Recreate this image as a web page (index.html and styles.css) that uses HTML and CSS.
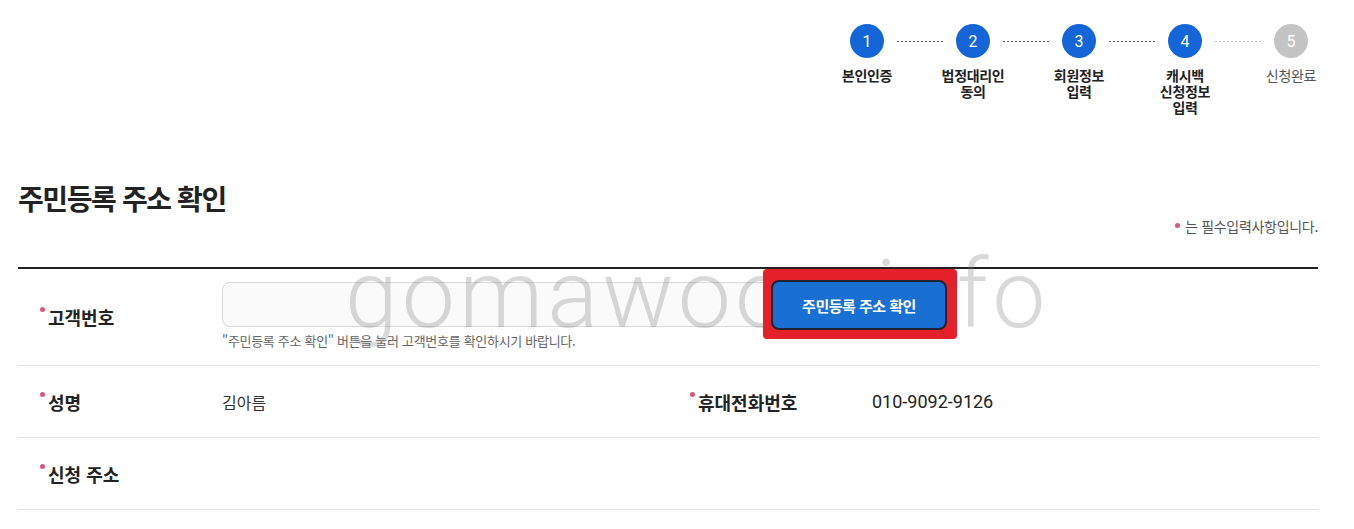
FILE: index.html
```html
<!DOCTYPE html>
<html lang="ko">
<head>
  <meta charset="UTF-8">
  <title>주민등록 주소 확인</title>
  <link rel="stylesheet" href="styles.css">
</head>
<body>

<div class="page">

  <!-- Steps -->
  <div class="steps">
    <div class="step">
      <div class="step-num">1</div>
      <div class="step-label">본인인증</div>
    </div>
    <div class="step-line"></div>
    <div class="step">
      <div class="step-num">2</div>
      <div class="step-label">법정대리인<br>동의</div>
    </div>
    <div class="step-line"></div>
    <div class="step">
      <div class="step-num">3</div>
      <div class="step-label">회원정보<br>입력</div>
    </div>
    <div class="step-line"></div>
    <div class="step">
      <div class="step-num">4</div>
      <div class="step-label">캐시백<br>신청정보<br>입력</div>
    </div>
    <div class="step-line off"></div>
    <div class="step off">
      <div class="step-num">5</div>
      <div class="step-label">신청완료</div>
    </div>
  </div>

  <h1 class="title">주민등록 주소 확인</h1>
  <p class="required-note"><span class="dot"></span>는 필수입력사항입니다.</p>

  <div class="form-table">
    <div class="form-row first">
      <div class="label"><span class="dot"></span>고객번호</div>
      <div class="cell wide">
        <div class="input-col">
          <input type="text" class="text-input">
          <p class="help">"주민등록 주소 확인" 버튼을 눌러 고객번호를 확인하시기 바랍니다.</p>
        </div>
        <div class="highlight">
          <button class="btn-primary">주민등록 주소 확인</button>
        </div>
      </div>
      <div class="watermark">gomawoon.info</div>
    </div>

    <div class="form-row">
      <div class="label"><span class="dot"></span>성명</div>
      <div class="cell">김아름</div>
      <div class="label"><span class="dot"></span>휴대전화번호</div>
      <div class="cell num">010-9092-9126</div>
    </div>

    <div class="form-row">
      <div class="label"><span class="dot"></span>신청 주소</div>
      <div class="cell wide"></div>
    </div>
  </div>

</div>

</body>
</html>
```

FILE: styles.css
```css
body {
  margin: 0;
  background: #fff;
  font-family: "Noto Sans CJK KR", "Noto Sans", sans-serif;
  color: #222;
}

.page {
  padding: 0 36px 0 18px;
}

/* Steps */
.steps {
  display: flex;
  justify-content: flex-end;
  padding-top: 24px;
  margin-right: -3px;
  height: 91px;
}

.step {
  width: 60px;
  flex-shrink: 0;
  display: flex;
  flex-direction: column;
  align-items: center;
}

.step-num {
  width: 34px;
  height: 34px;
  border-radius: 50%;
  background: #1466d8;
  color: #fff;
  font-family: "Roboto", sans-serif;
  font-size: 16px;
  display: flex;
  align-items: center;
  justify-content: center;
}

.step-label {
  margin-top: 9px;
  font-size: 14px;
  line-height: 16px;
  font-weight: bold;
  text-align: center;
  white-space: nowrap;
  letter-spacing: -0.3px;
  color: #222;
}

.step.off .step-num {
  background: #c4c4c4;
}

.step.off .step-label {
  font-weight: normal;
  color: #555;
}

.step-line {
  width: 46px;
  flex-shrink: 0;
  height: 1px;
  margin-top: 17px;
  background: repeating-linear-gradient(to right, #5a6270 0 2px, transparent 2px 4px);
}

.step-line.off {
  background: repeating-linear-gradient(to right, #bbb 0 2px, transparent 2px 4px);
}

/* Title */
.title {
  margin: 65px 0 0;
  font-size: 28px;
  line-height: 36px;
  font-weight: bold;
  letter-spacing: -1.4px;
  color: #222;
}

.required-note {
  margin: 1px 0 0;
  text-align: right;
  font-size: 14px;
  line-height: 18px;
  color: #555;
  letter-spacing: -0.3px;
}

.dot {
  display: inline-block;
  width: 5px;
  height: 5px;
  border-radius: 50%;
  background: #d6577a;
  vertical-align: top;
  margin: 2px 3px 0 0;
}

.required-note .dot {
  margin: 6px 5px 0 0;
}

/* Form table */
.form-table {
  margin-top: 32px;
  border-top: 2px solid #222;
}

.form-row {
  display: grid;
  grid-template-columns: 204px 446px 204px 446px;
  align-items: center;
  height: 71px;
  border-bottom: 1px solid #e4e4e4;
  position: relative;
}

.form-row.first {
  height: 96px;
  align-items: start;
}

.label {
  padding-left: 22px;
  font-size: 18px;
  line-height: 24px;
  font-weight: bold;
  letter-spacing: 0;
  color: #222;
}

.form-row.first .label {
  align-self: center;
}

.cell {
  font-size: 16px;
  color: #333;
}

.cell.num {
  font-family: "Roboto", sans-serif;
  font-size: 18px;
  color: #222;
}

.cell.wide {
  grid-column: 2 / 5;
}

.form-row.first .cell {
  display: flex;
  align-items: flex-start;
}

.input-col {
  width: 549px;
  padding-top: 13px;
}

.text-input {
  display: block;
  box-sizing: border-box;
  width: 100%;
  height: 45px;
  border: 1px solid #d9d9d9;
  border-radius: 8px;
  background: #fafafa;
  padding: 0 14px;
  font-size: 15px;
}

.help {
  margin: 6px 0 0;
  font-size: 13px;
  line-height: 16px;
  color: #666;
  letter-spacing: -0.3px;
  white-space: nowrap;
}

.highlight {
  position: relative;
  z-index: 2;
  margin-left: -8px;
  width: 194px;
  height: 70px;
  box-sizing: border-box;
  padding: 11px 10px 9px 8px;
  background: #e4202a;
  border-radius: 4px;
}

.btn-primary {
  width: 100%;
  height: 100%;
  border: 2px solid #1d2330;
  border-radius: 8px;
  background: #1a6fd3;
  color: #fff;
  font-family: "Noto Sans CJK KR", sans-serif;
  font-size: 15px;
  font-weight: bold;
  letter-spacing: -0.5px;
  cursor: pointer;
}

.watermark {
  position: absolute;
  z-index: 1;
  left: 327px;
  top: -21px;
  font-family: "Roboto", sans-serif;
  font-weight: 300;
  font-size: 95px;
  line-height: 94px;
  letter-spacing: 4px;
  color: rgba(120, 120, 120, 0.28);
  pointer-events: none;
  white-space: nowrap;
}
```
